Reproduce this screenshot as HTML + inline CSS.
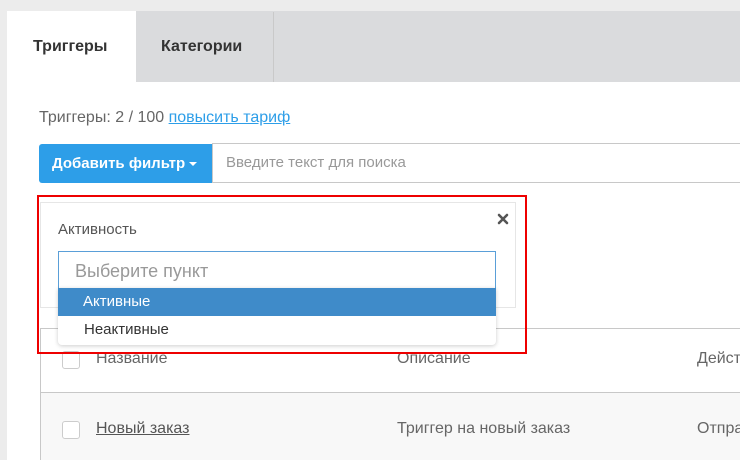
<!DOCTYPE html>
<html><head><meta charset="utf-8"><style>
*{box-sizing:border-box;margin:0;padding:0}
body{width:740px;height:460px;overflow:hidden;background:#ececec;font-family:"Liberation Sans","DejaVu Sans",sans-serif;position:relative}
.a{position:absolute}
.panel{left:7px;top:11px;width:733px;height:449px;background:#fff}
.tabs{left:136px;top:11px;width:604px;height:71px;background:#dadbdd}
.sep{left:273px;top:12px;width:1px;height:70px;background:#c9c9c9}
.t{font-size:16px;color:#333;font-weight:bold}
.cb{width:18px;height:18px;border:1px solid #ccc;border-radius:3px;background:#fff}
</style></head><body>
<div class="a panel"></div>
<div class="a tabs"></div>
<div class="a sep"></div>
<div class="a t" style="left:33px;top:38px">Триггеры</div>
<div class="a t" style="left:161px;top:38px">Категории</div>
<div class="a" style="left:39px;top:109px;font-size:16px;color:#666">Триггеры: 2 / 100 <span style="color:#2d9ee8;text-decoration:underline">повысить тариф</span></div>
<div class="a" style="left:39px;top:144px;width:173px;height:39px;background:#2d9ee8;border-radius:3px 0 0 3px;color:#fff;font-weight:bold;font-size:15px;line-height:39px;padding-left:13px;white-space:nowrap">Добавить фильтр <span style="display:inline-block;border-left:4px solid transparent;border-right:4px solid transparent;border-top:4px solid #fff;vertical-align:middle"></span></div>
<div class="a" style="left:212px;top:143px;width:530px;height:40px;border:1px solid #c8c8c8;font-size:15px;color:#999;line-height:38px;padding-left:13px">Введите текст для поиска</div>
<div class="a" style="left:40px;top:202px;width:476px;height:106px;border:1px solid #e6e6e6"></div>
<div class="a" style="left:58px;top:221px;font-size:15px;color:#555">Активность</div>
<svg class="a" style="left:497px;top:213px" width="12" height="12" viewBox="0 0 12 12"><path d="M2 2L10 10M10 2L2 10" stroke="#555" stroke-width="2.6" stroke-linecap="round"/></svg>
<div class="a" style="left:40px;top:328px;width:700px;height:1px;background:#c8c8c8"></div>
<div class="a" style="left:40px;top:328px;width:1px;height:132px;background:#c8c8c8"></div>
<div class="a" style="left:41px;top:392px;width:699px;height:1px;background:#c8c8c8"></div>
<div class="a" style="left:41px;top:393px;width:699px;height:67px;background:#f8f8f8"></div>
<div class="a cb" style="left:62px;top:351px"></div>
<div class="a cb" style="left:62px;top:421px"></div>
<div class="a" style="left:96px;top:350px;font-size:16px;color:#666">Название</div>
<div class="a" style="left:397px;top:350px;font-size:16px;color:#666">Описание</div>
<div class="a" style="left:697px;top:350px;font-size:16px;color:#666;white-space:nowrap">Действия</div>
<div class="a" style="left:96px;top:420px;font-size:16px;color:#555;text-decoration:underline">Новый заказ</div>
<div class="a" style="left:397px;top:420px;font-size:16px;color:#666;white-space:nowrap">Триггер на новый заказ</div>
<div class="a" style="left:697px;top:420px;font-size:16px;color:#666;white-space:nowrap">Отправить</div>
<div class="a" style="left:58px;top:251px;width:438px;height:38px;border:1px solid #5a9fd8;font-size:18px;color:#999;line-height:38px;padding-left:16px;background:#fff">Выберите пункт</div>
<div class="a" style="left:58px;top:288px;width:438px;height:57px;background:#fff;border-radius:0 0 4px 4px;box-shadow:0 1px 4px rgba(0,0,0,.2)"></div>
<div class="a" style="left:58px;top:288px;width:438px;height:28px;background:#3f8bc9;color:#fff;font-size:15px;line-height:28px;padding-left:25px">Активные</div>
<div class="a" style="left:84px;top:321px;font-size:15px;color:#333">Неактивные</div>
<div class="a" style="left:37px;top:195px;width:490px;height:159px;border:2px solid #e00"></div>
</body></html>
